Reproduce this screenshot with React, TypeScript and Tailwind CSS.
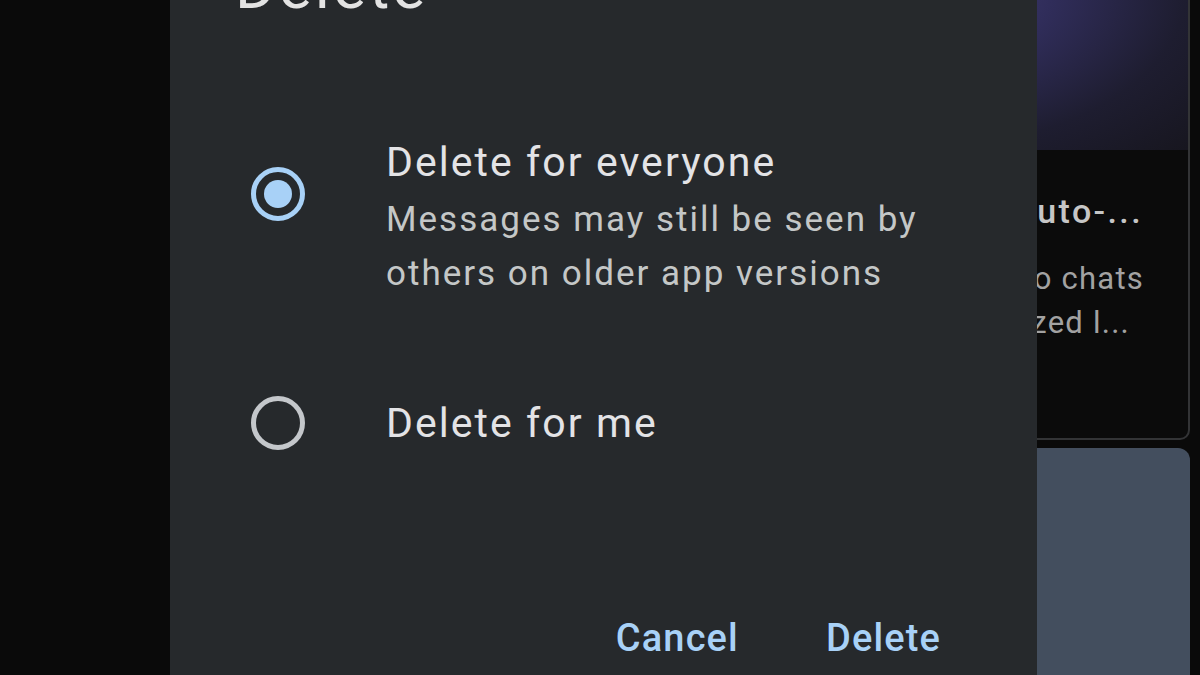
import { useState } from "react";

/**
 * Delete message dialog (dark theme), shown over the chat feed.
 */

type Choice = "everyone" | "me";

function Radio({ checked }: { checked: boolean }) {
  return (
    <span
      className={
        checked
          ? "flex h-[54px] w-[54px] shrink-0 items-center justify-center rounded-full border-[5px] border-[#a8d1f7]"
          : "flex h-[54px] w-[54px] shrink-0 items-center justify-center rounded-full border-[5px] border-[#c4c7cb]"
      }
    >
      {checked && <span className="h-[28px] w-[28px] rounded-full bg-[#a8d1f7]" />}
    </span>
  );
}

function FeedColumn() {
  return (
    <div className="flex h-full justify-end pr-[10px]">
      <div className="mt-[-20px] flex w-[420px] flex-col gap-[8px]">
        {/* 推荐卡片 */}
        <div className="flex h-[460px] flex-col overflow-hidden rounded-[10px] border-2 border-[#333436] bg-[#0b0b0b]">
          <div className="h-[168px] bg-[radial-gradient(ellipse_at_35%_5%,#46427c_0%,#302d5a_35%,#1e1d30_70%,#17161f_100%)]" />
          <div className="flex flex-col pt-[41px]">
            <div className="whitespace-nowrap pr-[45px] text-right text-[34px] font-medium leading-[40px] tracking-[0.07em] text-[#c6c6c6]">
              Set auto-...
            </div>
            <div className="mt-[26px] whitespace-nowrap pr-[44px] text-right text-[31px] leading-[44px] tracking-[0.04em] text-[#a2a2a2]">
              Go to chats
            </div>
            <div className="whitespace-nowrap pr-[58px] text-right text-[31px] leading-[44px] tracking-[0.04em] text-[#a2a2a2]">
              Organized l...
            </div>
          </div>
        </div>
        {/* 下一张卡片 */}
        <div className="flex-1 rounded-t-[12px] bg-[#434e5e]" />
      </div>
    </div>
  );
}

export default function App() {
  const [choice, setChoice] = useState<Choice>("everyone");

  return (
    <div className="relative h-[675px] w-[1200px] overflow-hidden bg-[#0a0a0a] font-['Roboto','Noto_Sans',sans-serif]">
      <FeedColumn />

      <div className="absolute left-[170px] top-[-45px] flex h-[780px] w-[867px] flex-col bg-[#26292c]">
        {/* 标题 */}
        <h2 className="h-[64px] pl-[65px] text-[62px] font-normal leading-[64px] tracking-[0.05em] text-[#e3e3e3]">
          Delete
        </h2>

        {/* 选项 */}
        <button
          type="button"
          onClick={() => setChoice("everyone")}
          className="mt-[119px] flex items-start pl-[81px] text-left"
        >
          <span className="mt-[29px]">
            <Radio checked={choice === "everyone"} />
          </span>
          <span className="ml-[81px] flex flex-col">
            <span className="text-[41px] leading-[48px] tracking-[0.05em] text-[#e3e3e6]">
              Delete for everyone
            </span>
            <span className="mt-[7px] text-[35px] leading-[54px] tracking-[0.057em] text-[#c4c7c7]">
              Messages may still be seen by
              <br />
              others on older app versions
            </span>
          </span>
        </button>

        <button
          type="button"
          onClick={() => setChoice("me")}
          className="mt-[95px] flex items-center pl-[81px] text-left"
        >
          <Radio checked={choice === "me"} />
          <span className="ml-[81px] text-[41px] leading-[48px] tracking-[0.05em] text-[#e3e3e6]">
            Delete for me
          </span>
        </button>

        {/* 按钮 */}
        <div className="mt-[164px] flex justify-end gap-[87px] pr-[96px]">
          <button type="button" className="text-[38px] font-medium leading-[48px] tracking-[0.03em] text-[#a8d1f7]">
            Cancel
          </button>
          <button type="button" className="text-[38px] font-medium leading-[48px] tracking-[0.03em] text-[#a8d1f7]">
            Delete
          </button>
        </div>
      </div>
    </div>
  );
}
